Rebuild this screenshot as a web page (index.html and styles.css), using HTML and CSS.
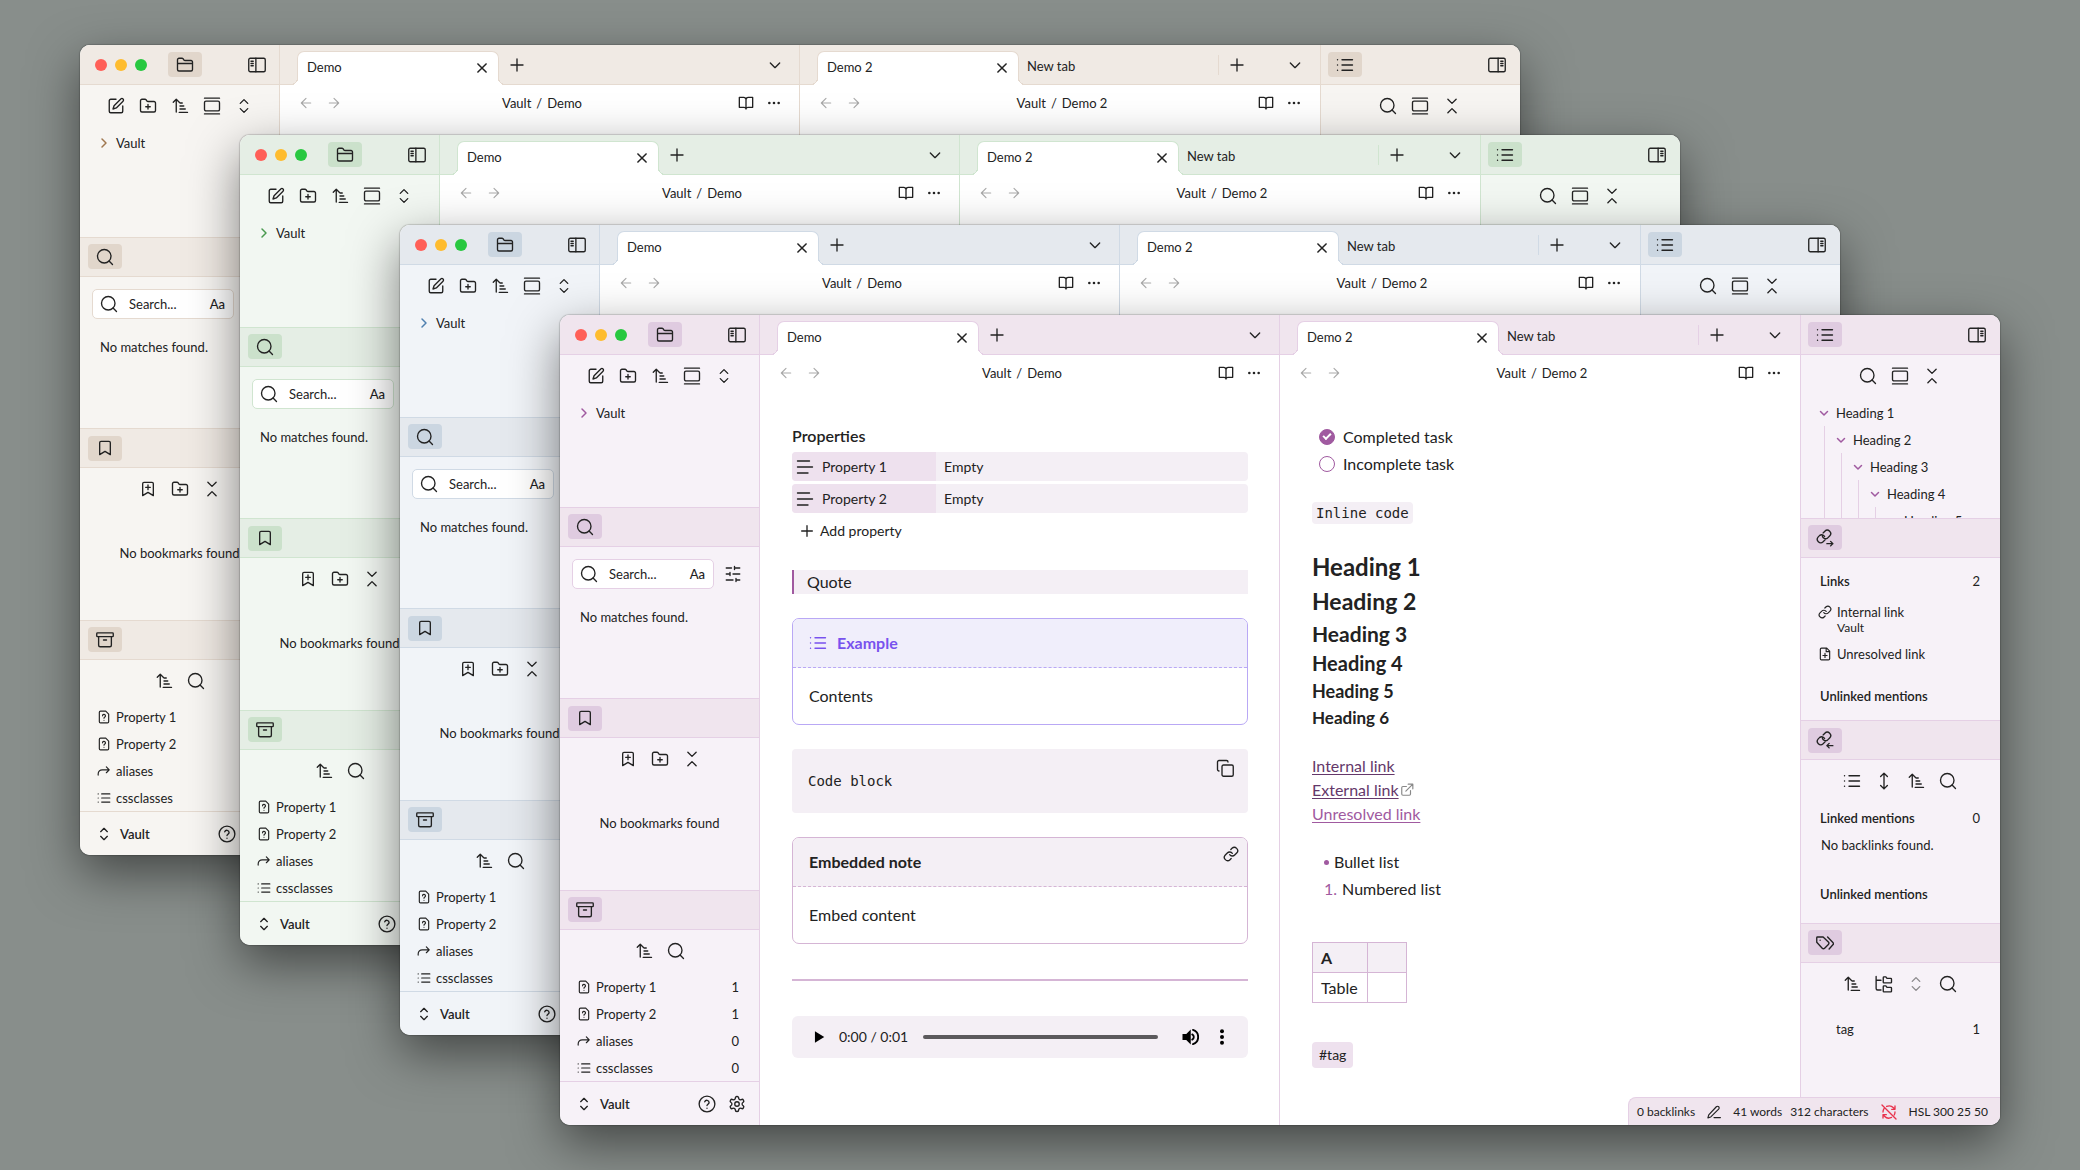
FILE: index.html
```html
<!DOCTYPE html>
<html lang="en">
<head>
<meta charset="utf-8">
<meta name="viewport" content="width=device-width, initial-scale=1">
<title>Vault</title>
<link rel="stylesheet" href="styles.css">
<script src="windows.js" defer></script>
</head>
<body>

<svg class="sprite" aria-hidden="true">
  <symbol id="i-folder" viewBox="0 0 24 24"><path d="M20 20a2 2 0 0 0 2-2V8a2 2 0 0 0-2-2h-7.9a2 2 0 0 1-1.69-.9L9.6 3.9A2 2 0 0 0 7.93 3H4a2 2 0 0 0-2 2v13a2 2 0 0 0 2 2ZM2 10h20"/></symbol>
  <symbol id="i-folder-plus" viewBox="0 0 24 24"><path d="M20 20a2 2 0 0 0 2-2V8a2 2 0 0 0-2-2h-7.9a2 2 0 0 1-1.69-.9L9.6 3.9A2 2 0 0 0 7.93 3H4a2 2 0 0 0-2 2v13a2 2 0 0 0 2 2ZM12 10v6M9 13h6"/></symbol>
  <symbol id="i-panel-left" viewBox="0 0 24 24"><rect x="1" y="3" width="22" height="18" rx="2"/><path d="M10.500 3v18M4 7h3M4 10h3M4 13h3"/></symbol>
  <symbol id="i-panel-right" viewBox="0 0 24 24"><rect x="1" y="3" width="22" height="18" rx="2"/><path d="M13.500 3v18M17 7h3M17 10h3M17 13h3"/></symbol>
  <symbol id="i-edit" viewBox="0 0 24 24"><path d="M12 3H5a2 2 0 0 0-2 2v14a2 2 0 0 0 2 2h14a2 2 0 0 0 2-2v-7M18.400 2.600a2.100 2.100 0 0 1 3 3L12.400 14.600 8 16l1.400-4.400Z"/></symbol>
  <symbol id="i-sort" viewBox="0 0 24 24"><path d="m3 7 4-4 4 4M7 3v17M12 8h3M12 12h5M12 16h7M11 20.500h11"/></symbol>
  <symbol id="i-gallery" viewBox="0 0 24 24"><path d="M2 1.500h20M2 22.500h20"/><rect x="2" y="5.500" width="20" height="13" rx="2"/></symbol>
  <symbol id="i-up-down" viewBox="0 0 24 24"><path d="m7 15.500 5 5 5-5M7 8.500l5-5 5 5"/></symbol>
  <symbol id="i-down-up" viewBox="0 0 24 24"><path d="m6.500 21 5.500-5.500 5.500 5.500M6.500 3l5.500 5.500L17.500 3"/></symbol>
  <symbol id="i-right" viewBox="0 0 24 24"><path d="m8 4 8 8-8 8"/></symbol>
  <symbol id="i-down" viewBox="0 0 24 24"><path d="m5 9 7 7 7-7"/></symbol>
  <symbol id="i-search" viewBox="0 0 24 24"><circle cx="11" cy="11" r="9"/><path d="m22 22-4.600-4.600"/></symbol>
  <symbol id="i-sliders" viewBox="0 0 24 24"><path d="M21 4h-7M10 4H3M21 12h-9M8 12H3M21 20h-5M12 20H3M14 2v4M8 10v4M16 18v4"/></symbol>
  <symbol id="i-bookmark" viewBox="0 0 24 24"><path d="m20 22-8-5-8 5V4a2 2 0 0 1 2-2h12a2 2 0 0 1 2 2Z"/></symbol>
  <symbol id="i-bookmark-plus" viewBox="0 0 24 24"><path d="m20 22-8-5-8 5V4a2 2 0 0 1 2-2h12a2 2 0 0 1 2 2ZM12 6v7M8.500 9.500h7"/></symbol>
  <symbol id="i-archive" viewBox="0 0 24 24"><rect x="1" y="2.500" width="22" height="5" rx="1"/><path d="M3.500 7.500V19a2 2 0 0 0 2 2h13a2 2 0 0 0 2-2V7.500M10 12h4"/></symbol>
  <symbol id="i-file-q" viewBox="0 0 24 24"><path d="M15 2H6a2 2 0 0 0-2 2v16a2 2 0 0 0 2 2h12a2 2 0 0 0 2-2V7ZM9.500 10a2.500 2.500 0 1 1 3.500 2.300c-.7.300-1 .8-1 1.700M12 17.500v.1"/></symbol>
  <symbol id="i-file-plus" viewBox="0 0 24 24"><path d="M15 2H6a2 2 0 0 0-2 2v16a2 2 0 0 0 2 2h12a2 2 0 0 0 2-2V7ZM14 2v6h6M12 11v7M8.500 14.500h7"/></symbol>
  <symbol id="i-forward" viewBox="0 0 24 24"><path d="m16 15 5-5-5-5M2 19v-2a7 7 0 0 1 7-7h12"/></symbol>
  <symbol id="i-list" viewBox="0 0 24 24"><path d="M8 5h14M8 12h14M8 19h14M2 5h.1M2 12h.1M2 19h.1"/></symbol>
  <symbol id="i-help" viewBox="0 0 24 24"><circle cx="12" cy="12" r="10.500"/><path d="M9 9a3 3 0 0 1 5.800 1c0 2-2.800 2.500-2.800 4M12 17.500v.1"/></symbol>
  <symbol id="i-gear" viewBox="0 0 24 24"><path d="M12.220 2h-.44a2 2 0 0 0-2 2v.18a2 2 0 0 1-1 1.730l-.43.25a2 2 0 0 1-2 0l-.15-.08a2 2 0 0 0-2.730.73l-.22.38a2 2 0 0 0 .73 2.730l.15.1a2 2 0 0 1 1 1.720v.51a2 2 0 0 1-1 1.740l-.15.09a2 2 0 0 0-.73 2.730l.22.38a2 2 0 0 0 2.730.73l.15-.08a2 2 0 0 1 2 0l.43.25a2 2 0 0 1 1 1.730V20a2 2 0 0 0 2 2h.44a2 2 0 0 0 2-2v-.18a2 2 0 0 1 1-1.730l.43-.25a2 2 0 0 1 2 0l.15.08a2 2 0 0 0 2.730-.73l.22-.39a2 2 0 0 0-.73-2.730l-.15-.08a2 2 0 0 1-1-1.740v-.5a2 2 0 0 1 1-1.740l.15-.09a2 2 0 0 0 .73-2.730l-.22-.38a2 2 0 0 0-2.730-.73l-.15.08a2 2 0 0 1-2 0l-.43-.25a2 2 0 0 1-1-1.730V4a2 2 0 0 0-2-2z"/><circle cx="12" cy="12" r="3"/></symbol>
  <symbol id="i-x" viewBox="0 0 24 24"><path d="M19 5 5 19M5 5l14 14"/></symbol>
  <symbol id="i-plus" viewBox="0 0 24 24"><path d="M4 12h16M12 4v16"/></symbol>
  <symbol id="i-left-arrow" viewBox="0 0 24 24"><path d="m12 20-8-8 8-8M20 12H4"/></symbol>
  <symbol id="i-right-arrow" viewBox="0 0 24 24"><path d="m12 4 8 8-8 8M4 12h16"/></symbol>
  <symbol id="i-book" viewBox="0 0 24 24"><path d="M2 3.500h6.500a3.500 3.500 0 0 1 3.500 3.500v14a3 3 0 0 0-3-2.500H2ZM22 3.500h-6.500A3.500 3.500 0 0 0 12 7v14a3 3 0 0 1 3-2.500h7Z"/></symbol>
  <symbol id="i-dots" viewBox="0 0 24 24"><g fill="currentColor" stroke="none"><circle cx="4" cy="12" r="2.200"/><circle cx="12" cy="12" r="2.200"/><circle cx="20" cy="12" r="2.200"/></g></symbol>
  <symbol id="i-text" viewBox="0 0 24 24"><path d="M18 4H2M22 12H2M16 20H2"/></symbol>
  <symbol id="i-copy" viewBox="0 0 24 24"><rect x="8" y="8" width="15" height="15" rx="2"/><path d="M4 16c-1.100 0-2-.9-2-2V4c0-1.100.9-2 2-2h10c1.100 0 2 .9 2 2"/></symbol>
  <symbol id="i-link" viewBox="0 0 24 24"><path d="M10 13a5 5 0 0 0 7.540.54l3-3a5 5 0 0 0-7.070-7.070l-1.720 1.710M14 11a5 5 0 0 0-7.540-.54l-3 3a5 5 0 0 0 7.070 7.070l1.710-1.710"/></symbol>
  <symbol id="i-external" viewBox="0 0 24 24"><path d="M18 13v6a2 2 0 0 1-2 2H5a2 2 0 0 1-2-2V8a2 2 0 0 1 2-2h6M14 2h8v8M10 14 22 2"/></symbol>
  <symbol id="i-links-out" viewBox="0 0 24 24"><path d="M8.500 9.500a4.500 4.500 0 0 0 6.500 3l3.200-3.200a4.500 4.500 0 0 0-6.400-6.400L9.500 5.200M11.500 10a4.500 4.500 0 0 0-6.500-1.500l-2 2a4.600 4.600 0 0 0 6.500 6.500l2.500-2.500M14.500 19.500h8M19.500 16.500l3 3-3 3"/></symbol>
  <symbol id="i-links-in" viewBox="0 0 24 24"><path d="M8.500 9.500a4.500 4.500 0 0 0 6.500 3l3.200-3.200a4.500 4.500 0 0 0-6.400-6.400L9.500 5.200M11.500 10a4.500 4.500 0 0 0-6.500-1.500l-2 2a4.600 4.600 0 0 0 6.500 6.500l2.500-2.500M14.500 19.500h8M17.500 16.500l-3 3 3 3"/></symbol>
  <symbol id="i-vertical" viewBox="0 0 24 24"><path d="m7.500 18 4.500 4.500 4.500-4.500M7.500 6 12 1.500 16.500 6M12 1.500v21"/></symbol>
  <symbol id="i-tags" viewBox="0 0 24 24"><path d="M9.500 4H2a1 1 0 0 0-1 1v6l7.300 8a2.200 2.200 0 0 0 3.200 0l5-5.100a2.200 2.200 0 0 0 0-3.100ZM5.500 8.200v.1M15.500 4l7 7.300a2.200 2.200 0 0 1 0 3.100L17.500 20"/></symbol>
  <symbol id="i-tree" viewBox="0 0 24 24"><path d="M1.500 2v16a2 2 0 0 0 2 2H8M1.500 7H8M12 10.500a1 1 0 0 1-1-1v-6a1 1 0 0 1 1-1h2.500l1.500 2h5a1 1 0 0 1 1 1v4a1 1 0 0 1-1 1ZM12 22.500a1 1 0 0 1-1-1v-6a1 1 0 0 1 1-1h2.500l1.500 2h5a1 1 0 0 1 1 1v4a1 1 0 0 1-1 1Z"/></symbol>
  <symbol id="i-pencil" viewBox="0 0 24 24"><path d="M12 21.500h11M16 3a2.800 2.800 0 0 1 4 4L6.500 20.500 1.500 22l1.500-5Z"/></symbol>
  <symbol id="i-sync-off" viewBox="0 0 24 24"><path d="M21 8 18.700 5.700A9 9 0 0 0 8.500 3.700M21 3v5h-5M3 12a9 9 0 0 1 1.500-5M21 12a9 9 0 0 1-1.200 4.500M3 16l2.300 2.300a9 9 0 0 0 10.500 1.900M3 21v-5h5M1.500 1.500l21 21"/></symbol>
  <symbol id="i-play" viewBox="0 0 24 24"><path d="M5 2v20l16-10Z" fill="currentColor" stroke="none"/></symbol>
  <symbol id="i-volume" viewBox="0 0 24 24"><path d="M2 8v8h5l6 6V2L7 8Z" fill="currentColor" stroke="none"/><path d="M15 8.500a4 4 0 0 1 0 7M16 2.500a10 10 0 0 1 0 19" stroke-width="2.500"/></symbol>
  <symbol id="i-more-v" viewBox="0 0 24 24"><g fill="currentColor" stroke="none"><circle cx="12" cy="3.500" r="3"/><circle cx="12" cy="12" r="3"/><circle cx="12" cy="20.500" r="3"/></g></symbol>
</svg>

<!-- Parts shared by every window -->
<template id="part-sidebar">
  <aside class="sidebar sidebar-left">
    <div class="stack">
      <section class="panel">
        <header class="bar">
          <span class="lights"><i class="light red"></i><i class="light amber"></i><i class="light lime"></i></span>
          <button class="chip" aria-label="Files"><svg class="icon"><use href="#i-folder"/></svg></button>
          <button class="toggle" aria-label="Collapse left sidebar"><svg class="icon"><use href="#i-panel-left"/></svg></button>
        </header>
        <div class="nav">
          <button aria-label="New note"><svg class="icon"><use href="#i-edit"/></svg></button>
          <button aria-label="New folder"><svg class="icon"><use href="#i-folder-plus"/></svg></button>
          <button aria-label="Sort"><svg class="icon"><use href="#i-sort"/></svg></button>
          <button aria-label="Auto-reveal"><svg class="icon"><use href="#i-gallery"/></svg></button>
          <button aria-label="Expand all"><svg class="icon"><use href="#i-up-down"/></svg></button>
        </div>
        <div class="row"><svg class="icon small accent"><use href="#i-right"/></svg><span>Vault</span></div>
      </section>
      <section class="panel">
        <header class="bar"><button class="chip" aria-label="Search"><svg class="icon"><use href="#i-search"/></svg></button></header>
        <div class="search-row">
          <label class="search-box">
            <svg class="icon"><use href="#i-search"/></svg>
            <input type="text" placeholder="Search..." aria-label="Search">
            <button class="case" aria-label="Match case">Aa</button>
          </label>
          <button aria-label="Search settings"><svg class="icon"><use href="#i-sliders"/></svg></button>
        </div>
        <p class="empty">No matches found.</p>
      </section>
      <section class="panel">
        <header class="bar"><button class="chip" aria-label="Bookmarks"><svg class="icon medium"><use href="#i-bookmark"/></svg></button></header>
        <div class="nav">
          <button aria-label="Bookmark tab"><svg class="icon medium"><use href="#i-bookmark-plus"/></svg></button>
          <button aria-label="New group"><svg class="icon"><use href="#i-folder-plus"/></svg></button>
          <button aria-label="Collapse all"><svg class="icon"><use href="#i-down-up"/></svg></button>
        </div>
        <p class="empty-center">No bookmarks found</p>
      </section>
      <section class="panel">
        <header class="bar"><button class="chip" aria-label="All properties"><svg class="icon"><use href="#i-archive"/></svg></button></header>
        <div class="nav">
          <button aria-label="Sort"><svg class="icon"><use href="#i-sort"/></svg></button>
          <button aria-label="Filter"><svg class="icon"><use href="#i-search"/></svg></button>
        </div>
        <div class="row"><svg class="icon small"><use href="#i-file-q"/></svg><span>Property 1</span><span class="count">1</span></div>
        <div class="row"><svg class="icon small"><use href="#i-file-q"/></svg><span>Property 2</span><span class="count">1</span></div>
        <div class="row"><svg class="icon small"><use href="#i-forward"/></svg><span>aliases</span><span class="count">0</span></div>
        <div class="row"><svg class="icon small"><use href="#i-list"/></svg><span>cssclasses</span><span class="count">0</span></div>
      </section>
    </div>
    <footer class="vault">
      <svg class="icon medium"><use href="#i-up-down"/></svg>
      <span class="vault-name">Vault</span>
      <button aria-label="Help"><svg class="icon"><use href="#i-help"/></svg></button>
      <button aria-label="Settings"><svg class="icon"><use href="#i-gear"/></svg></button>
    </footer>
  </aside>
</template>

<template id="part-demo">
  <header class="bar tabs">
    <div class="tab active"><span>Demo</span><button aria-label="Close"><svg class="icon small bold"><use href="#i-x"/></svg></button></div>
    <button class="tab-new" aria-label="New tab"><svg class="icon"><use href="#i-plus"/></svg></button>
    <button class="tab-list" aria-label="Tab list"><svg class="icon medium"><use href="#i-down"/></svg></button>
  </header>
  <div class="view-bar">
    <div class="history"><button aria-label="Back"><svg class="icon small"><use href="#i-left-arrow"/></svg></button><button aria-label="Forward"><svg class="icon small"><use href="#i-right-arrow"/></svg></button></div>
    <div class="crumbs"><span>Vault</span><span>/</span><span>Demo</span></div>
    <div class="actions"><button aria-label="Reading view"><svg class="icon medium"><use href="#i-book"/></svg></button><button aria-label="More options"><svg class="icon small"><use href="#i-dots"/></svg></button></div>
  </div>
</template>

<template id="part-demo-2">
  <header class="bar tabs">
    <div class="tab active"><span>Demo 2</span><button aria-label="Close"><svg class="icon small bold"><use href="#i-x"/></svg></button></div>
    <div class="tab idle"><span>New tab</span></div>
    <button class="tab-new" aria-label="New tab"><svg class="icon"><use href="#i-plus"/></svg></button>
    <button class="tab-list" aria-label="Tab list"><svg class="icon medium"><use href="#i-down"/></svg></button>
  </header>
  <div class="view-bar">
    <div class="history"><button aria-label="Back"><svg class="icon small"><use href="#i-left-arrow"/></svg></button><button aria-label="Forward"><svg class="icon small"><use href="#i-right-arrow"/></svg></button></div>
    <div class="crumbs"><span>Vault</span><span>/</span><span>Demo 2</span></div>
    <div class="actions"><button aria-label="Reading view"><svg class="icon medium"><use href="#i-book"/></svg></button><button aria-label="More options"><svg class="icon small"><use href="#i-dots"/></svg></button></div>
  </div>
</template>

<template id="part-outline">
  <header class="bar">
    <button class="chip" aria-label="Outline"><svg class="icon"><use href="#i-list"/></svg></button>
    <button class="toggle" aria-label="Collapse right sidebar"><svg class="icon"><use href="#i-panel-right"/></svg></button>
  </header>
  <div class="nav">
    <button aria-label="Search"><svg class="icon"><use href="#i-search"/></svg></button>
    <button aria-label="Auto-scroll"><svg class="icon"><use href="#i-gallery"/></svg></button>
    <button aria-label="Collapse all"><svg class="icon"><use href="#i-down-up"/></svg></button>
  </div>
</template>

<main class="desktop">
  <article class="window place-1 brown">
    <div data-part="sidebar"></div>
    <section class="pane"><div data-part="demo"></div></section>
    <section class="pane"><div data-part="demo-2"></div></section>
    <aside class="sidebar sidebar-right"><div data-part="outline"></div></aside>
  </article>
  <article class="window place-2 green">
    <div data-part="sidebar"></div>
    <section class="pane"><div data-part="demo"></div></section>
    <section class="pane"><div data-part="demo-2"></div></section>
    <aside class="sidebar sidebar-right"><div data-part="outline"></div></aside>
  </article>
  <article class="window place-3 blue">
    <div data-part="sidebar"></div>
    <section class="pane"><div data-part="demo"></div></section>
    <section class="pane"><div data-part="demo-2"></div></section>
    <aside class="sidebar sidebar-right"><div data-part="outline"></div></aside>
  </article>

  <article class="window place-4 purple">
    <div data-part="sidebar"></div>

    <section class="pane">
      <div data-part="demo"></div>
      <div class="note">
        <div class="properties">
          <h2 class="properties-title">Properties</h2>
          <div class="property"><span class="property-key"><svg class="icon"><use href="#i-text"/></svg>Property 1</span><span class="property-value">Empty</span></div>
          <div class="property"><span class="property-key"><svg class="icon"><use href="#i-text"/></svg>Property 2</span><span class="property-value">Empty</span></div>
          <button class="add-property"><svg class="icon medium"><use href="#i-plus"/></svg>Add property</button>
        </div>
        <blockquote class="quote">Quote</blockquote>
        <div class="callout example">
          <div class="callout-title"><svg class="icon"><use href="#i-list"/></svg>Example</div>
          <div class="callout-body">Contents</div>
        </div>
        <div class="code-block">
          <code>Code block</code>
          <button class="copy" aria-label="Copy"><svg class="icon"><use href="#i-copy"/></svg></button>
        </div>
        <div class="callout embed">
          <div class="callout-title">Embedded note<button class="open-link" aria-label="Open link"><svg class="icon medium"><use href="#i-link"/></svg></button></div>
          <div class="callout-body">Embed content</div>
        </div>
        <hr>
        <div class="audio">
          <button aria-label="Play"><svg class="icon small"><use href="#i-play"/></svg></button>
          <span class="time">0:00 / 0:01</span>
          <input class="seek" type="range" min="0" max="1" value="0" aria-label="Seek">
          <button aria-label="Mute"><svg class="icon"><use href="#i-volume"/></svg></button>
          <button aria-label="More"><svg class="icon medium"><use href="#i-more-v"/></svg></button>
        </div>
      </div>
    </section>

    <section class="pane">
      <div data-part="demo-2"></div>
      <div class="note">
        <div class="tasks">
          <label class="task"><input type="checkbox" checked>Completed task</label>
          <label class="task"><input type="checkbox">Incomplete task</label>
        </div>
        <p class="code-line"><code class="inline-code">Inline code</code></p>
        <div class="headings">
          <h1>Heading 1</h1>
          <h2>Heading 2</h2>
          <h3>Heading 3</h3>
          <h4>Heading 4</h4>
          <h5>Heading 5</h5>
          <h6>Heading 6</h6>
        </div>
        <div class="links">
          <a href="#internal">Internal link</a>
          <span class="external"><a href="#external">External link</a><svg class="icon small"><use href="#i-external"/></svg></span>
          <a class="unresolved" href="#unresolved">Unresolved link</a>
        </div>
        <div class="lists">
          <ul><li>Bullet list</li></ul>
          <ol><li>Numbered list</li></ol>
        </div>
        <table>
          <thead><tr><th scope="col">A</th><th scope="col"></th></tr></thead>
          <tbody><tr><td>Table</td><td></td></tr></tbody>
        </table>
        <a class="tag" href="#tag">#tag</a>
      </div>
    </section>

    <aside class="sidebar sidebar-right">
      <div class="stack">
        <section class="panel">
          <div data-part="outline"></div>
          <ul class="tree">
            <li><div class="node"><svg class="icon small accent"><use href="#i-down"/></svg>Heading 1</div>
              <ul><li><div class="node"><svg class="icon small accent"><use href="#i-down"/></svg>Heading 2</div>
                <ul><li><div class="node"><svg class="icon small accent"><use href="#i-down"/></svg>Heading 3</div>
                  <ul><li><div class="node"><svg class="icon small accent"><use href="#i-down"/></svg>Heading 4</div>
                    <ul><li><div class="node leaf">Heading 5</div></li></ul>
                  </li></ul>
                </li></ul>
              </li></ul>
            </li>
          </ul>
        </section>
        <section class="panel">
          <header class="bar"><button class="chip" aria-label="Outgoing links"><svg class="icon"><use href="#i-links-out"/></svg></button></header>
          <div class="mentions outgoing">
            <h3 class="group">Links<span class="count">2</span></h3>
            <div class="link-item"><svg class="icon small"><use href="#i-link"/></svg><span>Internal link<small>Vault</small></span></div>
            <div class="link-item"><svg class="icon small"><use href="#i-file-plus"/></svg><span>Unresolved link</span></div>
            <h3 class="group">Unlinked mentions</h3>
          </div>
        </section>
        <section class="panel">
          <header class="bar"><button class="chip" aria-label="Backlinks"><svg class="icon"><use href="#i-links-in"/></svg></button></header>
          <div class="nav">
            <button aria-label="Collapse results"><svg class="icon"><use href="#i-list"/></svg></button>
            <button aria-label="Show more context"><svg class="icon"><use href="#i-vertical"/></svg></button>
            <button aria-label="Sort"><svg class="icon"><use href="#i-sort"/></svg></button>
            <button aria-label="Search"><svg class="icon"><use href="#i-search"/></svg></button>
          </div>
          <div class="mentions">
            <h3 class="group">Linked mentions<span class="count">0</span></h3>
            <p class="none">No backlinks found.</p>
            <h3 class="group">Unlinked mentions</h3>
          </div>
        </section>
        <section class="panel">
          <header class="bar"><button class="chip" aria-label="Tags"><svg class="icon"><use href="#i-tags"/></svg></button></header>
          <div class="nav">
            <button aria-label="Sort"><svg class="icon"><use href="#i-sort"/></svg></button>
            <button aria-label="Show nested tags"><svg class="icon"><use href="#i-tree"/></svg></button>
            <button aria-label="Expand all" disabled><svg class="icon"><use href="#i-up-down"/></svg></button>
            <button aria-label="Search"><svg class="icon"><use href="#i-search"/></svg></button>
          </div>
          <div class="tag-row"><span>tag</span><span class="count">1</span></div>
        </section>
      </div>
    </aside>

    <footer class="status">
      <span>0 backlinks</span>
      <svg class="icon small"><use href="#i-pencil"/></svg>
      <span class="counts"><span>41 words</span><span>312 characters</span></span>
      <svg class="icon medium off"><use href="#i-sync-off"/></svg>
      <span>HSL 300 25 50</span>
    </footer>
  </article>
</main>
</body>
</html>
```
FILE: windows.js
```js
// Fills each placeholder with its shared window part.
document.querySelectorAll("[data-part]").forEach((slot) => {
  const part = document.getElementById("part-" + slot.dataset.part);
  slot.replaceWith(part.content.cloneNode(true));
});
```
FILE: styles.css
```css
*, *::before, *::after { box-sizing: border-box; }

body {
  margin: 0;
  font-family: Lato, "Open Sans", sans-serif;
  font-size: 13px;
  line-height: 18px;
  color: #222;
}

h1, h2, h3, h4, h5, h6, p, ul, ol, blockquote { margin: 0; padding: 0; }
ul, ol { list-style: none; }

button {
  display: flex;
  align-items: center;
  justify-content: center;
  flex: none;
  padding: 0;
  border: 0;
  background: none;
  color: inherit;
  font: inherit;
}

.sprite { position: absolute; width: 0; height: 0; }

.icon {
  display: block;
  flex: none;
  width: 18px;
  height: 18px;
  fill: none;
  stroke: currentColor;
  stroke-width: 1.8;
  stroke-linecap: round;
  stroke-linejoin: round;
  overflow: visible;
}
.icon.medium { width: 16px; height: 16px; stroke-width: 2; }
.icon.small { width: 14px; height: 14px; stroke-width: 2; }
.icon.bold { stroke-width: 2.6; }
.icon.accent { color: var(--accent); stroke-width: 3; width: 12px; height: 12px; margin: 0 1px; }

/* Desktop and windows */
.desktop {
  position: relative;
  min-height: 100vh;
  overflow: hidden;
  background: #888e8b;
}

.window {
  position: absolute;
  display: grid;
  grid-template-columns: 200px minmax(0, 1fr) minmax(0, 1fr) 200px;
  border-radius: 10px;
  overflow: hidden;
  background: #fff;
  box-shadow: 0 0 1px 1px rgba(0, 0, 0, .16), 0 18px 50px rgba(0, 0, 0, .5);
}
.place-1 { inset: 45px 560px 315px 80px; }
.place-2 { inset: 135px 400px 225px 240px; }
.place-3 { inset: 225px 240px 135px 400px; }
.place-4 { inset: 315px 80px 45px 560px; }

.brown { --bar: #f0eae4; --side: #f7f5f2; --chip: #e1d6cb; --line: #e5dad0; --accent: #a07850; }
.green { --bar: #e5eee5; --side: #f2f7f2; --chip: #cbe1cb; --line: #d0e5d0; --accent: #4a9a50; }
.blue { --bar: #e5e9ee; --side: #f1f4f8; --chip: #cbd6e1; --line: #d0dae5; --accent: #5080b0; }
.purple { --bar: #f0e5ee; --side: #f7f2f8; --chip: #dfcbe0; --line: #e5d0e5; --accent: #a05aa0; }

.bar {
  display: flex;
  align-items: center;
  height: 40px;
  padding: 0 8px;
  background: var(--bar);
  border-bottom: 1px solid var(--line);
}
.chip {
  width: 34px;
  height: 25px;
  border-radius: 4px;
  background: var(--chip);
}
.lights { display: flex; gap: 8px; margin: 0 21px 0 7px; }
.light { width: 12px; height: 12px; border-radius: 50%; }
.red { background: #ff5f57; }
.amber { background: #febc2e; }
.lime { background: #28c840; }
.toggle { margin-left: auto; margin-right: 6px; }

/* Sidebars */
.sidebar {
  display: flex;
  flex-direction: column;
  min-height: 0;
  background: var(--side);
}
.sidebar-left { border-right: 1px solid var(--line); }
.sidebar-right { border-left: 1px solid var(--line); }
.sidebar-left .toggle { margin-right: 5px; }
.sidebar-right .bar { padding-left: 7px; }

.stack {
  flex: 1;
  min-height: 0;
  display: grid;
  grid-template-rows: repeat(4, minmax(0, 1fr));
}
.panel { overflow: hidden; min-height: 0; }
.panel + .panel { border-top: 1px solid var(--line); }
.panel + .panel .bar { height: 39px; }

.nav {
  display: flex;
  align-items: center;
  justify-content: center;
  height: 44px;
  padding-bottom: 2px;
}
.sidebar-right .nav { padding-right: 2px; }
.nav button { width: 32px; height: 24px; }
.nav button:disabled { opacity: .5; }

.row {
  display: flex;
  align-items: center;
  gap: 5px;
  height: 27px;
  padding: 0 20px 0 17px;
}
.count { margin-left: auto; font-weight: 400; }

.search-row { display: flex; align-items: center; gap: 10px; padding: 12px 0 0 12px; }
.search-box {
  display: flex;
  align-items: center;
  width: 142px;
  height: 30px;
  padding: 0 8px 0 7px;
  border: 1px solid var(--line);
  border-radius: 5px;
  background: #fff;
}
.search-box input {
  flex: 1;
  min-width: 0;
  padding: 0;
  margin-left: 11px;
  border: 0;
  outline: 0;
  background: none;
  color: inherit;
  font: inherit;
}
.search-box input::placeholder { color: inherit; opacity: 1; }
.case { font-weight: 500; }
.empty { padding: 19px 20px 0; }
.empty-center { padding-top: 32px; text-align: center; }

.vault {
  display: flex;
  align-items: center;
  gap: 12px;
  height: 44px;
  padding: 0 13px 0 16px;
  border-top: 1px solid var(--line);
}
.vault-name { margin-left: -4px; margin-right: auto; font-weight: 600; }

/* Panes */
.pane { min-width: 0; }
.sidebar-left + .pane { border-right: 1px solid var(--line); }

.tabs { padding: 0 12px 0 17px; }
.sidebar-left + .pane .tabs { padding-right: 11px; }
.tab {
  display: flex;
  align-items: center;
  justify-content: space-between;
  width: 202px;
  min-width: 0;
}
.tab.active {
  position: relative;
  align-self: flex-end;
  height: 34px;
  margin-bottom: -1px;
  padding: 0 9px 3px;
  border: 1px solid var(--line);
  border-bottom: 0;
  border-radius: 7px 7px 0 0;
  background: #fff;
}
.tab.active .icon { margin-top: 2px; }
.tab.active::before, .tab.active::after {
  content: "";
  position: absolute;
  bottom: 0;
  width: 7px;
  height: 7px;
}
.tab.active::before {
  right: 100%;
  background: radial-gradient(circle at 0 0, var(--bar) 6px, var(--line) 6px, var(--line) 7px, #fff 7px);
}
.tab.active::after {
  left: 100%;
  background: radial-gradient(circle at 100% 0, var(--bar) 6px, var(--line) 6px, var(--line) 7px, #fff 7px);
}
.tab.idle { width: 200px; height: 20px; padding: 2px 0 0 8px; border-right: 1px solid var(--line); }
.tab-new, .tab-list { width: 26px; height: 26px; }
.tab-new { margin-left: 5px; }
.tab-list { margin-left: auto; }

.view-bar {
  display: grid;
  grid-template-columns: 1fr auto 1fr;
  align-items: center;
  height: 36px;
  padding: 0 18px 0 22px;
}
.sidebar-left + .pane .view-bar { padding-right: 17px; }
.history { display: flex; gap: 12px; margin-left: -4px; color: #aaa; }
.history button { width: 16px; }
.crumbs { display: flex; gap: 5px; }
.actions { display: flex; justify-content: flex-end; gap: 12px; }
.actions button { width: 16px; }

.note {
  display: flex;
  flex-direction: column;
  gap: 24px;
  padding: 33px 31px 0 32px;
  font-size: 16px;
  line-height: 24px;
}

/* Properties */
.properties { display: flex; flex-direction: column; gap: 3px; padding-bottom: 1px; font-size: 14px; }
.properties-title { margin-bottom: 1px; font-size: 16px; line-height: 24px; font-weight: 600; }
.property { display: flex; height: 29px; border-radius: 4px; overflow: hidden; background: #f4eff5; line-height: 29px; }
.property-key { display: flex; align-items: center; gap: 8px; width: 144px; padding-left: 4px; background: #eee1ee; }
.property-value { padding-left: 8px; }
.add-property { align-self: flex-start; gap: 5px; height: 29px; padding-left: 7px; }

.quote { padding-left: 13px; border-left: 2px solid var(--accent); background: #f4eff5; }

.callout { border: 1px solid #d5b5d5; border-radius: 7px; overflow: hidden; }
.callout-title {
  display: flex;
  align-items: center;
  gap: 10px;
  position: relative;
  height: 49px;
  padding: 0 16px;
  border-bottom: 1px dashed #d5b5d5;
  background: #f4eff5;
  font-weight: 700;
}
.callout-body { padding: 16px; }
.example { border-color: #b9a8f5; }
.example .callout-title { border-color: #b9a8f5; background: #f0eefb; color: #7852ee; }
.open-link { position: absolute; top: 8px; right: 8px; }

.code-block { position: relative; padding: 19px 16px 20px; border-radius: 4px; background: #f4eff5; }
code { font-family: "DejaVu Sans Mono", monospace; font-size: 14px; }
.copy { position: absolute; top: 10px; right: 14px; }

hr { width: 100%; height: 2px; margin: 11px 0; border: 0; background: #d5b5d5; }

.audio {
  display: flex;
  align-items: center;
  gap: 15px;
  height: 42px;
  padding: 0 18px 0 20px;
  border-radius: 6px;
  background: #f4eff5;
  color: #000;
}
.time { margin-left: -2px; font-size: 14px; color: #222; }
.seek {
  appearance: none;
  flex: 1;
  min-width: 0;
  height: 4px;
  margin: 0 8px 0 0;
  border-radius: 2px;
  background: #5b595c;
}
.seek::-webkit-slider-thumb { appearance: none; width: 0; height: 0; }

/* Second note */
.tasks { display: flex; flex-direction: column; gap: 3px; padding: 1px 0 0 7px; }
.task { display: flex; align-items: center; gap: 8px; height: 24px; }
.task input {
  appearance: none;
  display: grid;
  place-items: center;
  width: 16px;
  height: 16px;
  margin: 0;
  border: 1px solid var(--accent);
  border-radius: 50%;
}
.task input:checked { background: var(--accent); }
.task input:checked::after {
  content: "";
  width: 8px;
  height: 5px;
  margin-bottom: 3px;
  border-left: 2px solid #fff;
  border-bottom: 2px solid #fff;
  transform: rotate(-45deg);
}
.inline-code { padding: 3px 4px; border-radius: 4px; background: #f4eff5; }

.headings > * { font-weight: 700; }
h1 { font-size: 24px; line-height: 36px; }
.headings h2 { font-size: 23px; line-height: 33px; }
.headings h3 { font-size: 21px; line-height: 31px; }
h4 { font-size: 20px; line-height: 29px; }
h5 { font-size: 18px; line-height: 27px; }
h6 { font-size: 17px; line-height: 25px; }

.links { display: flex; flex-direction: column; align-items: flex-start; }
.links a { color: #64386a; text-decoration-thickness: 1px; text-underline-offset: 2px; }
.links a.unresolved { color: #a05aa0; }
.external { display: flex; align-items: center; gap: 1px; }
.external .icon { color: #888; }

.lists { display: flex; flex-direction: column; gap: 3px; padding-left: 12px; }
.lists li { display: flex; align-items: center; }
.lists ul li { gap: 5px; }
.lists ul li::before { content: ""; width: 5px; height: 5px; border-radius: 50%; background: var(--accent); }
.lists ol { counter-reset: item; }
.lists ol li { counter-increment: item; gap: 5px; }
.lists ol li::before { content: counter(item) "."; color: var(--accent); }

table { align-self: flex-start; margin: 17px 0 15px; border-collapse: collapse; line-height: 22px; }
th, td { height: 30px; min-width: 39px; padding: 3px 9px 3px 8px; border: 1px solid #d5b5d5; text-align: left; }
th:last-child { width: 39px; }
th { background: #f4eff5; }

.tag {
  align-self: flex-start;
  padding: 0 7px;
  border-radius: 4px;
  background: #eee1ee;
  color: inherit;
  font-size: 14px;
  line-height: 26px;
  text-decoration: none;
}

/* Right sidebar */
.tree { padding-left: 7px; }
.tree ul { margin-left: 16px; border-left: 1px solid var(--line); }
.node { display: flex; align-items: center; gap: 5px; height: 27px; padding-left: 9px; }
.leaf { padding-left: 28px; }

.mentions { padding: 0 20px 0 19px; }
.group { display: flex; height: 18px; margin: 5px 0 22px; font-size: 13px; line-height: 18px; font-weight: 600; }
.outgoing { padding-top: 9px; }
.outgoing .group { margin-bottom: 13px; }
.link-item { display: flex; gap: 5px; margin: 0 0 10px -2px; line-height: 18px; }
.link-item .icon { margin-top: 2px; }
.link-item small { display: block; font-size: 12px; line-height: 14px; }
.outgoing .group:last-child { margin-top: 24px; }
.none { margin: -13px 0 31px 1px; }
.tag-row { display: flex; padding: 13px 20px 0 35px; }

.status {
  position: absolute;
  right: 0;
  bottom: 0;
  display: flex;
  align-items: center;
  gap: 12px;
  height: 28px;
  padding: 0 12px 0 8px;
  border: 1px solid var(--line);
  border-width: 1px 0 0 1px;
  border-top-left-radius: 8px;
  background: var(--bar);
  font-size: 12px;
}
.counts { display: flex; gap: 8px; }
.off { color: #e8324c; }
```
